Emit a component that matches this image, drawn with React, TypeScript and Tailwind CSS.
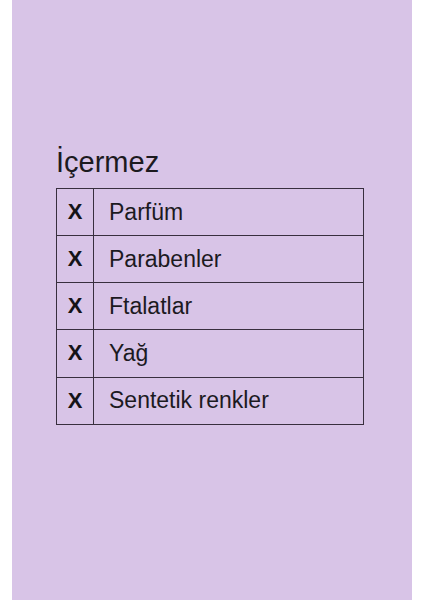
import React from "react";

const items = ["Parfüm", "Parabenler", "Ftalatlar", "Yağ", "Sentetik renkler"];

export default function App() {
  return (
    <div className="w-[424px] h-[600px] bg-white flex justify-center" style={{ fontFamily: '"Liberation Sans", Arial, sans-serif' }}>
      <div className="w-[400px] h-[600px] bg-[#d8c4e7] flex flex-col pl-[44px] pt-[146px]">
        <div className="text-[29px] leading-[32px] text-[#1c1a1f]">İçermez</div>
        <div className="mt-[10px] w-[308px] border-[1.5px] border-[#382f3e] flex flex-col">
          {items.map((t, i) => (
            <div
              key={t}
              className={
                i === 0
                  ? "h-[46px] flex items-center"
                  : "h-[47.2px] flex items-center border-t-[1.5px] border-[#382f3e]"
              }
            >
              <div className="w-[37px] h-full flex items-center justify-center border-r-[1.5px] border-[#382f3e] text-[22px] leading-none font-bold text-[#151317]">
                X
              </div>
              <div className="pl-[15px] text-[23px] leading-none text-[#1c1a1f]">{t}</div>
            </div>
          ))}
        </div>
      </div>
    </div>
  );
}
